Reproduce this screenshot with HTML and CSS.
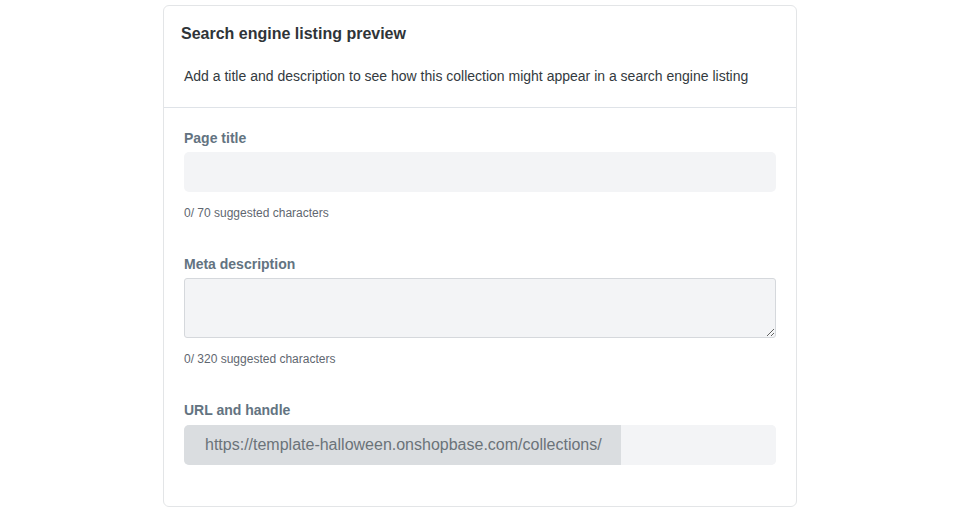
FILE: index.html
```html
<!DOCTYPE html>
<html>
<head>
<meta charset="utf-8">
<link rel="stylesheet" href="styles.css">
</head>
<body>
<div class="page">
  <section class="card">
    <header class="card-head">
      <h2 class="card-title">Search engine listing preview</h2>
      <p class="card-desc">Add a title and description to see how this collection might appear in a search engine listing</p>
    </header>
    <div class="card-body">
      <div class="field">
        <label class="label">Page title</label>
        <input class="input" type="text">
        <div class="help">0/ 70 suggested characters</div>
      </div>
      <div class="field">
        <label class="label">Meta description</label>
        <textarea class="textarea"></textarea>
        <div class="help">0/ 320 suggested characters</div>
      </div>
      <div class="field last">
        <label class="label url-label">URL and handle</label>
        <div class="url-group">
          <span class="url-prefix">https://template-halloween.onshopbase.com/collections/</span>
          <input class="url-input" type="text">
        </div>
      </div>
    </div>
  </section>
</div>
</body>
</html>
```
FILE: styles.css
```css
* { box-sizing: border-box; }
html, body { margin: 0; padding: 0; background: #ffffff; }
body { font-family: "Liberation Sans", Arial, sans-serif; }
.page { padding: 5px 0 0 163px; }
.card {
  width: 634px;
  height: 502px;
  background: #fff;
  border: 1px solid #e3e5e7;
  border-radius: 6px;
}
.card-head {
  padding: 0 20px 0 17px;
  border-bottom: 1px solid #dfe3e8;
  height: 102px;
}
.card-title {
  margin: 0;
  padding-top: 18px;
  font-size: 16px;
  line-height: 20px;
  font-weight: 700;
  color: #2f3438;
}
.card-desc {
  margin: 22px 0 0 3px;
  font-size: 14px;
  line-height: 20px;
  color: #333a40;
}
.card-body { padding: 20px 20px 0 20px; }
.field { margin-bottom: 33px; }
.label {
  display: block;
  font-size: 14px;
  line-height: 20px;
  font-weight: 700;
  color: #637381;
  margin-bottom: 4px;
}
.url-label { margin-bottom: 5px; }
.input {
  display: block;
  width: 100%;
  height: 40px;
  border: none;
  border-radius: 5px;
  background: #f3f4f6;
  outline: none;
}
.textarea {
  display: block;
  width: 100%;
  height: 60px;
  border: 1px solid #d5d8dc;
  border-radius: 3px;
  background: #f3f4f6;
  outline: none;
  resize: vertical;
}
.help {
  margin-top: 13px;
  font-size: 12px;
  line-height: 16px;
  color: #5f6770;
}
.url-group {
  display: flex;
  height: 40px;
  border-radius: 5px;
  overflow: hidden;
  background: #f3f4f6;
}
.url-prefix {
  background: #dadde0;
  color: #6b7379;
  font-size: 16px;
  line-height: 40px;
  padding: 0 20px 0 21px;
  white-space: nowrap;
  width: 437px;
}
.url-input {
  flex: 1;
  border: none;
  background: #f3f4f6;
  outline: none;
  min-width: 0;
}
```
